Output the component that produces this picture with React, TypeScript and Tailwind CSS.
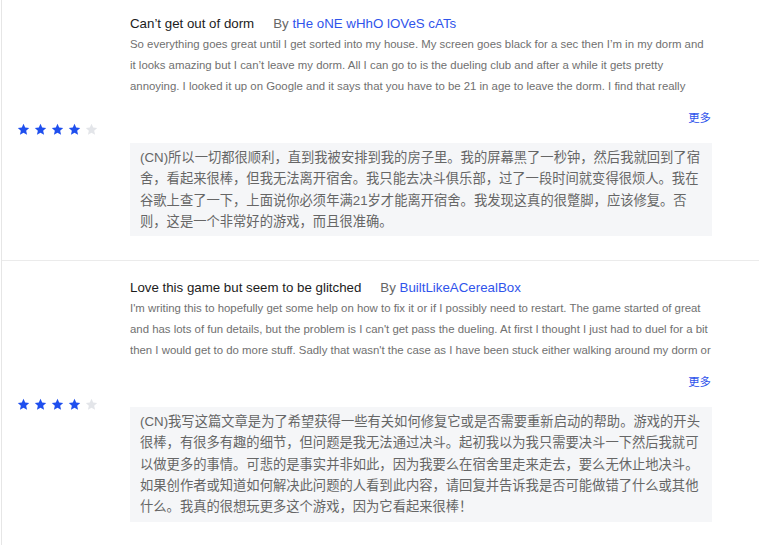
// Review list — app store style reviews with a machine translated (CN) block.

type Review = {
    title: string;
    author: string;
    rating: number;
    body: string;
    translation: string;
};

const REVIEWS: Review[] = [
    {
        title: "Can’t get out of dorm",
        author: "tHe oNE wHhO lOVeS cATs",
        rating: 4,
        body:
            "So everything goes great until I get sorted into my house. My screen goes black for a sec then I’m in my dorm and it looks amazing but I can’t leave my dorm. All I can go to is the dueling club and after a while it gets pretty annoying. I looked it up on Google and it says that you have to be 21 in age to leave the dorm. I find that really annoying and it should be fixed. Otherwise this is a really good game and very accurate.",
        translation:
            "(CN)所以一切都很顺利，直到我被安排到我的房子里。我的屏幕黑了一秒钟，然后我就回到了宿舍，看起来很棒，但我无法离开宿舍。我只能去决斗俱乐部，过了一段时间就变得很烦人。我在谷歌上查了一下，上面说你必须年满21岁才能离开宿舍。我发现这真的很蹩脚，应该修复。否则，这是一个非常好的游戏，而且很准确。",
    },
    {
        title: "Love this game but seem to be glitched",
        author: "BuiltLikeACerealBox",
        rating: 4,
        body:
            "I'm writing this to hopefully get some help on how to fix it or if I possibly need to restart. The game started of great and has lots of fun details, but the problem is I can't get pass the dueling. At first I thought I just had to duel for a bit then I would get to do more stuff. Sadly that wasn't the case as I have been stuck either walking around my dorm or dueling endlessly. If the creator or anyone who knows how to fix this sees this, please reply and tell me if I might have done something wrong or something else. I really want to play more of this game because it looks great!",
        translation:
            "(CN)我写这篇文章是为了希望获得一些有关如何修复它或是否需要重新启动的帮助。游戏的开头很棒，有很多有趣的细节，但问题是我无法通过决斗。起初我以为我只需要决斗一下然后我就可以做更多的事情。可悲的是事实并非如此，因为我要么在宿舍里走来走去，要么无休止地决斗。如果创作者或知道如何解决此问题的人看到此内容，请回复并告诉我是否可能做错了什么或其他什么。我真的很想玩更多这个游戏，因为它看起来很棒！",
    },
];

const FONT = "font-['Liberation_Sans','Noto_Sans_CJK_SC',Arial,sans-serif]";

function Star({ filled }: { filled: boolean }) {
    return (
        <svg width="13" height="13" viewBox="0 0 24 24" aria-hidden>
            <path
                d="M12 1.6l3.1 6.9 7.4.7-5.6 5 1.7 7.4L12 17.8l-6.6 3.8 1.7-7.4-5.6-5 7.4-.7z"
                fill={filled ? "#1f4fee" : "#e3e5e9"}
            />
        </svg>
    );
}

function Stars({ rating }: { rating: number }) {
    return (
        <div className="flex gap-[4px]">
            {[1, 2, 3, 4, 5].map((i) => (
                <Star key={i} filled={i <= rating} />
            ))}
        </div>
    );
}

function ReviewRow({ review }: { review: Review }) {
    return (
        <div className="flex items-center border-b border-[#ebebeb]">
            {/* Rating column */}
            <div className="mt-[2px] w-[128px] shrink-0 pl-[15px]">
                <Stars rating={review.rating} />
            </div>

            {/* Content column */}
            <div className="w-[582px] shrink-0 pt-[17px] pb-[24px]">
                <div className="flex items-center gap-[19px] text-[13.3px] leading-[20px] whitespace-nowrap">
                    <span className="text-[#1c1c1c]">{review.title}</span>
                    <span className="text-[#666]">
                        By <span className="text-[#2f54eb]">{review.author}</span>
                    </span>
                </div>

                <p className="h-[63px] overflow-hidden text-[11.4px] leading-[21px] text-[#707070]">
                    {review.body}
                </p>

                <div className="mt-[13px] flex justify-end pr-px">
                    <button className="text-[11.4px] leading-[16px] text-[#2f54eb]">更多</button>
                </div>

                <p className="mt-[17px] bg-[#f5f6f8] py-[4px] pl-[10px] pr-[10px] text-[13.3px] leading-[21.3px] text-[#666]">
                    {review.translation}
                </p>
            </div>
        </div>
    );
}

export default function App() {
    return (
        <div className={`${FONT} h-[545px] overflow-hidden bg-white`}>
            <div className="-mt-[3px] ml-px min-h-[560px] border-l border-[#e6e6e6]">
                {REVIEWS.map((r) => (
                    <ReviewRow key={r.author} review={r} />
                ))}
            </div>
        </div>
    );
}
